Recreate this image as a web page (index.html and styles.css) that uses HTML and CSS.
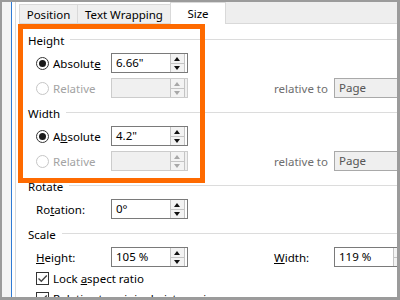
FILE: index.html
```
<!DOCTYPE html>
<html lang="en">
<head>
    <meta charset="UTF-8">
    <title>Layout - Size</title>
    <link rel="stylesheet" href="styles.css">
</head>
<body>
    <div class="frame">
        <div class="side"></div>
        <div class="panel">
            <div class="tabs">
                <div class="tab tab-pos">Position</div>
                <div class="tab tab-wrap">Text Wrapping</div>
                <div class="tab tab-size active">Size</div>
                <div class="tab-fill"></div>
            </div>

            <div class="content">
                <div class="group first"><span>Height</span></div>
                <div class="row">
                    <div class="opt"><span class="radio on"></span><span>Absolut<u>e</u></span></div>
                    <div class="spin"><span class="val">6.66"</span><span class="arrows"><i class="up"></i><i class="down"></i></span></div>
                </div>
                <div class="row">
                    <div class="opt off"><span class="radio"></span><span>Relative</span></div>
                    <div class="spin off"><span class="val"></span><span class="arrows"><i class="up"></i><i class="down"></i></span></div>
                    <span class="rel">relative to</span>
                    <div class="select">Page</div>
                </div>

                <div class="group"><span>Width</span></div>
                <div class="row">
                    <div class="opt"><span class="radio on"></span><span>A<u>b</u>solute</span></div>
                    <div class="spin"><span class="val">4.2"</span><span class="arrows"><i class="up"></i><i class="down"></i></span></div>
                </div>
                <div class="row">
                    <div class="opt off"><span class="radio"></span><span>Relative</span></div>
                    <div class="spin off"><span class="val"></span><span class="arrows"><i class="up"></i><i class="down"></i></span></div>
                    <span class="rel">relative to</span>
                    <div class="select">Page</div>
                </div>

                <div class="group"><span>Rotate</span></div>
                <div class="row">
                    <div class="opt label"><span>Ro<u>t</u>ation:</span></div>
                    <div class="spin"><span class="val">0°</span><span class="arrows"><i class="up"></i><i class="down"></i></span></div>
                </div>

                <div class="group"><span>Scale</span></div>
                <div class="row">
                    <div class="opt label"><span><u>H</u>eight:</span></div>
                    <div class="spin"><span class="val">105 %</span><span class="arrows"><i class="up"></i><i class="down"></i></span></div>
                    <span class="rel dark"><u>W</u>idth:</span>
                    <div class="spin"><span class="val">119 %</span><span class="arrows"><i class="up"></i><i class="down"></i></span></div>
                </div>
                <div class="check-row first">
                    <span class="check"><svg width="11" height="11" viewBox="0 0 11 11"><path d="M1.5 5.5 L4.3 8.3 L9.8 2.4" fill="none" stroke="#444" stroke-width="1.4"/></svg></span>
                    <span>Lock <u>a</u>spect ratio</span>
                </div>
                <div class="check-row">
                    <span class="check"><svg width="11" height="11" viewBox="0 0 11 11"><path d="M1.5 5.5 L4.3 8.3 L9.8 2.4" fill="none" stroke="#444" stroke-width="1.4"/></svg></span>
                    <span>Relative to original picture size</span>
                </div>
            </div>
        </div>

        <!-- annotation box drawn over the dialog -->
        <div class="highlight"></div>
    </div>
</body>
</html>
```

FILE: styles.css
```
body {
    margin: 0;
    font-family: "Noto Sans", Arial, sans-serif;
    font-size: 11.5px;
    color: #000;
}

.frame {
    position: relative;
    width: 400px;
    height: 300px;
    box-sizing: border-box;
    border: 2px solid #9b9b9b;
    border-right-width: 3px;
    border-bottom-width: 3px;
    background: #fff;
    display: flex;
    overflow: hidden;
}

.side {
    width: 9px;
    flex: none;
    background: #f4f4f4;
    border-right: 1px solid #2f7bd5;
}

.panel {
    flex: 1;
    margin-left: 3px;
    border-left: 1px solid #dadada;
    min-width: 0;
}

/* tabs */
.tabs {
    display: flex;
    height: 22px;
    padding-left: 3px;
}

.tab {
    box-sizing: border-box;
    margin-top: 2px;
    height: 20px;
    line-height: 19px;
    text-align: center;
    background: #efefef;
    border: 1px solid #d9d9d9;
    border-right: none;
    white-space: nowrap;
}

.tab-pos { width: 58px; }
.tab-wrap { width: 93px; }
.tab-size { width: 56px; }

.tab.active {
    margin-top: 0;
    height: 22px;
    line-height: 22px;
    background: #fff;
    border-bottom: none;
    border-right: 1px solid #d9d9d9;
}

.tab-fill {
    flex: 1;
    background: #eeeeee;
    border-bottom: 1px solid #d9d9d9;
}

/* body */
.content {
    padding-left: 12px;
}

.group {
    display: flex;
    align-items: center;
    height: 16px;
    margin-top: 7px;
    white-space: nowrap;
}

.group.first {
    margin-top: 8px;
}

.group::after {
    content: "";
    flex: 1;
    height: 1px;
    margin-left: 6px;
    margin-top: -1px;
    background: #dcdcdc;
}

.row {
    display: flex;
    align-items: center;
    height: 20px;
    margin-top: 5px;
    margin-left: 8px;
    white-space: nowrap;
}

.opt {
    width: 75px;
    flex: none;
    display: flex;
    align-items: center;
}

.opt.off {
    color: #a3a3a3;
}

.radio {
    box-sizing: border-box;
    width: 13px;
    height: 13px;
    margin-right: 4px;
    border: 1px solid #c6c6c6;
    border-radius: 50%;
    background: #fff;
    position: relative;
}

.radio.on {
    border-color: #333;
}

.radio.on::after {
    content: "";
    position: absolute;
    left: 2px;
    top: 2px;
    width: 7px;
    height: 7px;
    border-radius: 50%;
    background: #1a1a1a;
}

.spin {
    box-sizing: border-box;
    width: 77px;
    height: 20px;
    flex: none;
    display: flex;
    border: 1px solid #7a7a7a;
    background: #fff;
}

.spin .val {
    flex: 1;
    padding-left: 4px;
    line-height: 18px;
}

.spin.off {
    border-color: #cccccc;
    background: #f0f0f0;
}

.arrows {
    box-sizing: border-box;
    width: 15px;
    margin: 0 2px 0 0;
    display: flex;
    flex-direction: column;
    border-left: 1px solid #c4c4c4;
    border-right: 1px solid #c4c4c4;
    background: #f3f3f3;
}

.arrows i {
    flex: 1;
    position: relative;
}

.arrows i.up {
    border-bottom: 1px solid #c4c4c4;
}

.arrows i::after {
    content: "";
    position: absolute;
    left: 3px;
    top: 3px;
    border-left: 3.5px solid transparent;
    border-right: 3.5px solid transparent;
}

.arrows i.up::after {
    border-bottom: 4px solid #111;
}

.arrows i.down::after {
    top: 2px;
    border-top: 4px solid #111;
}

.spin.off .arrows i.up::after { border-bottom-color: #a8a8a8; }
.spin.off .arrows i.down::after { border-top-color: #a8a8a8; }

.rel {
    width: 60px;
    flex: none;
    margin-left: 86px;
    color: #6e6e6e;
}

.rel.dark {
    color: #000;
}

.select {
    box-sizing: border-box;
    width: 80px;
    height: 20px;
    flex: none;
    padding-left: 4px;
    line-height: 18px;
    border: 1px solid #a9a9a9;
    background: #efefef;
    color: #555;
}

.check-row {
    display: flex;
    align-items: center;
    height: 16px;
    margin-top: 4px;
    margin-left: 8px;
    white-space: nowrap;
}

.check-row.first {
    margin-top: 3px;
}

.check {
    box-sizing: border-box;
    width: 13px;
    height: 13px;
    margin-right: 4px;
    border: 1px solid #333;
    background: #fff;
    display: flex;
    align-items: center;
    justify-content: center;
}

.highlight {
    position: absolute;
    left: 16px;
    top: 22px;
    width: 187px;
    height: 159px;
    box-sizing: border-box;
    border: 5px solid #fe6a00;
}
```
